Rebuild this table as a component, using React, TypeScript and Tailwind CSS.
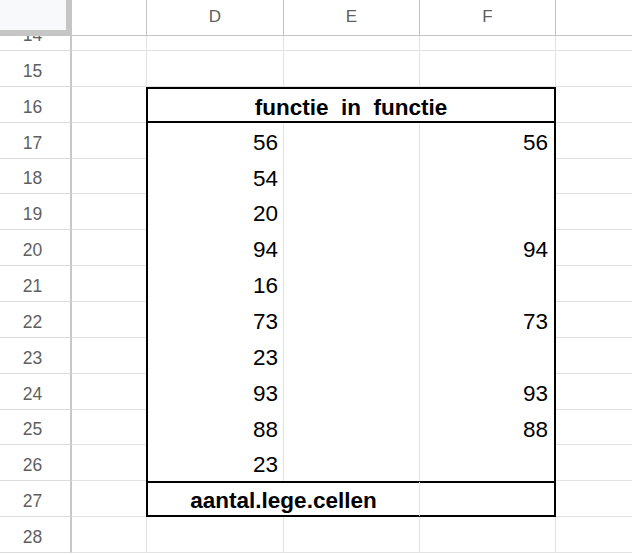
import React from "react";

type Row = { n: number; d?: number; f?: number; kind?: "title" | "footer" | "table" };

const rows: Row[] = [
  { n: 15 },
  { n: 16, kind: "title" },
  { n: 17, d: 56, f: 56, kind: "table" },
  { n: 18, d: 54, kind: "table" },
  { n: 19, d: 20, kind: "table" },
  { n: 20, d: 94, f: 94, kind: "table" },
  { n: 21, d: 16, kind: "table" },
  { n: 22, d: 73, f: 73, kind: "table" },
  { n: 23, d: 23, kind: "table" },
  { n: 24, d: 93, f: 93, kind: "table" },
  { n: 25, d: 88, f: 88, kind: "table" },
  { n: 26, d: 23, kind: "table" },
  { n: 27, kind: "footer" },
  { n: 28 },
];

const font = { fontFamily: '"Liberation Sans", Arial, sans-serif' };

const RowNum = ({ n }: { n: number }) => (
  <div className="w-[72px] shrink-0 flex items-center justify-center pr-[5px] pt-[6px] border-r-2 border-b border-r-[#c8c8c8] border-b-[#dcdcdc] text-[17.5px] leading-none text-[#5f5f5f]">
    {n}
  </div>
);

const SheetRow = ({ row }: { row: Row }) => {
  const inTable = !!row.kind;
  // the sheet's rows are not all the same height
  const height = row.n === 18 || row.n === 25 ? "h-[35px]" : "h-[36px]";
  return (
    <div className={`flex ${height}`}>
      <RowNum n={row.n} />
      {inTable ? (
        <div className="w-[74px] shrink-0 border-b border-[#e2e2e2]" />
      ) : (
        <div className="w-[75px] shrink-0 border-r border-b border-[#e2e2e2]" />
      )}

      {row.kind === "title" && (
        <div className="w-[410px] shrink-0 flex items-center justify-center pt-[6px] border-2 border-black text-[22.5px] leading-none font-bold text-black whitespace-pre">
          {"functie  in  functie"}
        </div>
      )}

      {row.kind === "table" && (
        <>
          <div className="w-[138px] shrink-0 flex items-center justify-end pr-[5px] pt-[5px] border-l-2 border-l-black border-r border-r-[#e2e2e2] text-[22.5px] leading-none text-black">
            {row.d}
          </div>
          <div className="w-[136px] shrink-0 border-r border-[#e2e2e2]" />
          <div className="w-[136px] shrink-0 flex items-center justify-end pr-[6px] pt-[5px] border-r-2 border-black text-[22.5px] leading-none text-black">
            {row.f ?? ""}
          </div>
        </>
      )}

      {row.kind === "footer" && (
        <>
          <div className="w-[274px] shrink-0 flex items-center justify-center pt-[4px] border-l-2 border-y-2 border-black border-r border-r-[#e2e2e2] text-[22.5px] leading-none font-bold text-black">
            aantal.lege.cellen
          </div>
          <div className="w-[136px] shrink-0 border-y-2 border-r-2 border-black" />
        </>
      )}

      {!row.kind && (
        <>
          <div className="w-[137px] shrink-0 border-r border-[#e2e2e2] border-b" />
          <div className="w-[136px] shrink-0 border-r border-[#e2e2e2] border-b" />
          <div className="w-[136px] shrink-0 border-r border-[#e2e2e2] border-b" />
        </>
      )}

      <div className="flex-1 border-b border-[#e2e2e2]" />
    </div>
  );
};

export default function App() {
  return (
    <div className="w-[632px] h-[554px] overflow-hidden bg-white" style={font}>
      {/* column header */}
      <div className="flex h-[36px] border-b border-[#c4c4c4] text-[17px] leading-none text-[#5f5f5f]">
        <div className="w-[72px] shrink-0 bg-[#f8f9fa] border-r-[6px] border-b-[5px] border-[#c6c6c6]" />
        <div className="w-[75px] shrink-0 border-r border-[#c4c4c4]" />
        <div className="w-[137px] shrink-0 flex items-center justify-center pb-[2px] border-r border-[#c4c4c4]">D</div>
        <div className="w-[136px] shrink-0 flex items-center justify-center pb-[2px] border-r border-[#c4c4c4]">E</div>
        <div className="w-[136px] shrink-0 flex items-center justify-center pb-[2px] border-r border-[#c4c4c4]">F</div>
        <div className="flex-1" />
      </div>

      {/* body, scrolled so row 14 is mostly hidden */}
      <div className="h-[518px] overflow-hidden">
        <div className="-mt-[21px]">
          <SheetRow row={{ n: 14 }} />
          {rows.map((r) => (
            <SheetRow key={r.n} row={r} />
          ))}
        </div>
      </div>
    </div>
  );
}
